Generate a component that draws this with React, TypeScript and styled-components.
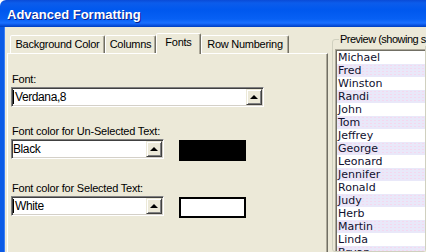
import styled, { createGlobalStyle } from 'styled-components';

const GlobalStyle = createGlobalStyle`
  html, body {
    margin: 0;
    padding: 0;
    background: #ffffff;
  }
  * {
    box-sizing: border-box;
  }
`;

const Window = styled.div`
  width: 426px;
  height: 252px;
  overflow: hidden;
  display: flex;
  flex-direction: column;
  font-family: 'Liberation Sans', Arial, sans-serif;
`;

const TitleBar = styled.div`
  height: 27px;
  flex: none;
  padding: 2px 0 0 7px;
  border-top-left-radius: 6px;
  background: linear-gradient(
    #0a4bd6 0,
    #0c5ceb 3px,
    #0058ee 10px,
    #0760f4 19px,
    #1a70ff 23px,
    #0a55e4 25px,
    #003fbe 27px
  );
`;

const Title = styled.span`
  font-size: 13px;
  font-weight: bold;
  line-height: 25px;
  color: #ffffff;
  text-shadow: 1px 1px #0a1e8c;
`;

const Body = styled.div`
  flex: 1;
  display: flex;
  gap: 4px;
  padding: 6px 0 0 3px;
  background: #ece9d8;
  border-left: 4px solid #0a5ae6;
  box-shadow: inset 1px 0 #3a7ef5;
  min-height: 0;
`;

const TabArea = styled.div`
  width: 321px;
  flex: none;
  display: flex;
  flex-direction: column;
`;

const TabStrip = styled.div`
  height: 20px;
  display: flex;
  align-items: flex-end;
  padding-left: 3px;
`;

const Tab = styled.div<{ $w: number; $active?: boolean }>`
  position: relative;
  width: ${({ $w }) => $w}px;
  height: ${({ $active }) => ($active ? 21 : 18)}px;
  margin-bottom: ${({ $active }) => ($active ? -1 : 0)}px;
  z-index: ${({ $active }) => ($active ? 1 : 0)};
  background: #ece9d8;
  border: 1px solid;
  border-bottom: none;
  border-color: #ffffff #716f64 transparent #ffffff;
  box-shadow: inset -1px 0 #aca899;
  border-radius: 2px 2px 0 0;
  font-size: 11px;
  letter-spacing: -0.25px;
  line-height: 17px;
  text-align: center;
  color: #000000;
  white-space: nowrap;
`;

const TabPanel = styled.div`
  flex: 1;
  display: flex;
  flex-direction: column;
  align-items: flex-start;
  padding: 19px 0 0 3px;
  border: 1px solid;
  border-bottom: none;
  border-color: #ffffff #716f64 transparent #ffffff;
  box-shadow: inset -1px 0 #aca899;
`;

const FieldLabel = styled.div<{ $top?: number }>`
  margin-top: ${({ $top }) => $top ?? 0}px;
  margin-bottom: 1px;
  padding-left: 1px;
  font-size: 11px;
  letter-spacing: -0.2px;
  line-height: 13px;
  color: #000000;
`;

const FieldRow = styled.div`
  display: flex;
  align-items: flex-start;
`;

const Combo = styled.div<{ $w: number }>`
  width: ${({ $w }) => $w}px;
  height: 20px;
  display: flex;
  align-items: stretch;
  background: #ffffff;
  border: 1px solid;
  border-color: #808080 #ffffff #ffffff #808080;
  box-shadow: inset 1px 1px #404040, inset -1px -1px #d4d0c8;
  padding: 1px;
`;

const ComboText = styled.div`
  flex: 1;
  display: flex;
  align-items: center;
  font-size: 12px;
  letter-spacing: -0.4px;
  color: #000000;
`;

const Caret = styled.span`
  width: 1px;
  height: 14px;
  background: #000000;
  margin-right: 1px;
`;

const DropButton = styled.div`
  width: 16px;
  display: flex;
  align-items: center;
  justify-content: center;
  background: #ece9d8;
  border: 1px solid;
  border-color: #ece9d8 #404040 #404040 #ece9d8;
  box-shadow: inset 1px 1px #ffffff, inset -1px -1px #808080;
`;

const UpArrow = styled.span`
  width: 0;
  height: 0;
  border-left: 4px solid transparent;
  border-right: 4px solid transparent;
  border-bottom: 4px solid #000000;
`;

const Swatch = styled.div<{ $color: string }>`
  width: 67px;
  height: 21px;
  margin: 1px 0 0 15px;
  background: ${({ $color }) => $color};
  border: 2px solid #000000;
`;

const PreviewGroup = styled.fieldset`
  flex: 1;
  min-width: 0;
  margin: 0;
  padding: 3px 0 0 2px;
  border: 1px solid #d0d0bf;
  border-radius: 3px;
  display: flex;
  flex-direction: column;
  align-self: stretch;
`;

const GroupLegend = styled.legend`
  padding: 0 1px;
  margin-left: 4px;
  font-size: 11px;
  letter-spacing: -0.5px;
  line-height: 13px;
  color: #000000;
  white-space: nowrap;
`;

const ListBox = styled.div`
  flex: 1;
  background: #ffffff;
  border-top: 1px solid #aca899;
  border-left: 1px solid #aca899;
  box-shadow: inset 1px 1px #716f64;
  padding: 1px 0 0 1px;
  overflow: hidden;
`;

const ListRow = styled.div<{ $alt: boolean }>`
  height: 13px;
  line-height: 13px;
  padding-left: 1px;
  font-family: 'DejaVu Sans', Verdana, sans-serif;
  font-size: 11px;
  color: #10102e;
  white-space: nowrap;
  background-color: ${({ $alt }) => ($alt ? '#e9e8f9' : '#ffffff')};
  background-image: ${({ $alt }) =>
    $alt ? 'radial-gradient(circle, #f4d8ef 0.7px, transparent 0.9px)' : 'none'};
  background-size: 4px 3px;
`;

const tabs = [
  { label: 'Background Color', w: 95 },
  { label: 'Columns', w: 51 },
  { label: 'Fonts', w: 45, active: true },
  { label: 'Row Numbering', w: 88 },
];

const names = [
  'Michael',
  'Fred',
  'Winston',
  'Randi',
  'John',
  'Tom',
  'Jeffrey',
  'George',
  'Leonard',
  'Jennifer',
  'Ronald',
  'Judy',
  'Herb',
  'Martin',
  'Linda',
  'Bryan',
];

const ComboBox = ({ value, width, caret }: { value: string; width: number; caret?: boolean }) => (
  <Combo $w={width}>
    <ComboText>
      {caret && <Caret />}
      {value}
    </ComboText>
    <DropButton>
      <UpArrow />
    </DropButton>
  </Combo>
);

export default function App() {
  return (
    <>
      <GlobalStyle />
      <Window>
        <TitleBar>
          <Title>Advanced Formatting</Title>
        </TitleBar>
        <Body>
          <TabArea>
            <TabStrip>
              {tabs.map((t) => (
                <Tab key={t.label} $w={t.w} $active={t.active}>
                  {t.label}
                </Tab>
              ))}
            </TabStrip>
            <TabPanel>
              <FieldLabel>Font:</FieldLabel>
              <ComboBox value="Verdana,8" width={253} caret />

              <FieldLabel $top={18}>Font color for Un-Selected Text:</FieldLabel>
              <FieldRow>
                <ComboBox value="Black" width={153} />
                <Swatch $color="#000000" />
              </FieldRow>

              <FieldLabel $top={21}>Font color for Selected Text:</FieldLabel>
              <FieldRow>
                <ComboBox value="White" width={153} caret />
                <Swatch $color="#ffffff" />
              </FieldRow>
            </TabPanel>
          </TabArea>
          <PreviewGroup>
            <GroupLegend>Preview (showing sample)</GroupLegend>
            <ListBox>
              {names.map((n, i) => (
                <ListRow key={n} $alt={i % 2 === 1}>
                  {n}
                </ListRow>
              ))}
            </ListBox>
          </PreviewGroup>
        </Body>
      </Window>
    </>
  );
}
